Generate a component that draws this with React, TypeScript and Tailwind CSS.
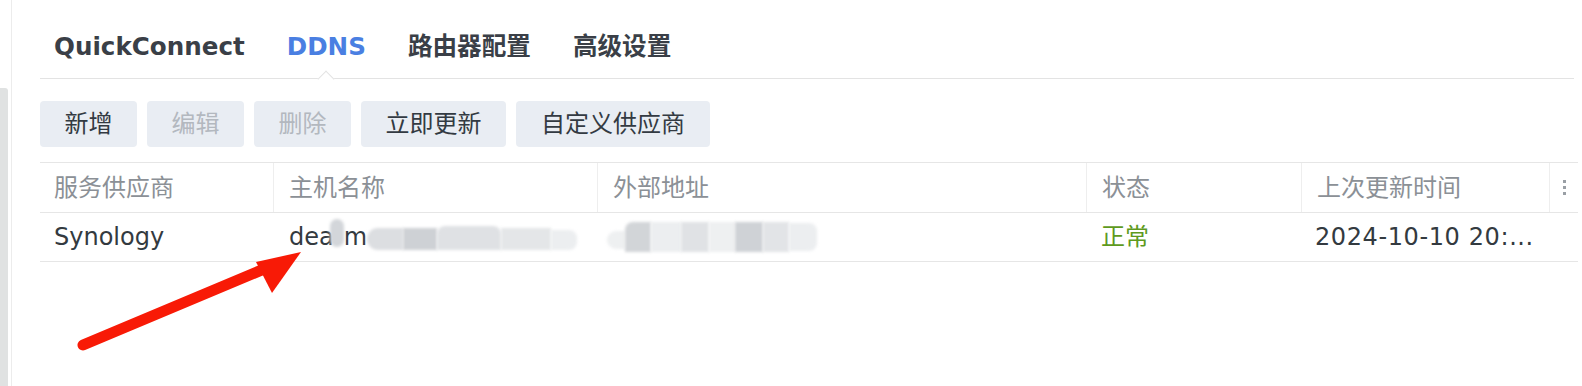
import React from 'react';

const font = { fontFamily: '"DejaVu Sans", "Noto Sans CJK SC", sans-serif' };

const tabs = ['QuickConnect', 'DDNS', '路由器配置', '高级设置'];

const buttons: { label: string; width: string; disabled?: boolean }[] = [
    { label: '新增', width: 'w-[97px]' },
    { label: '编辑', width: 'w-[97px]', disabled: true },
    { label: '删除', width: 'w-[97px]', disabled: true },
    { label: '立即更新', width: 'w-[145px]' },
    { label: '自定义供应商', width: 'w-[194px]' },
];

const Blur: React.FC<{ className: string }> = ({ className }) => (
    <span className={`inline-block blur-[1.5px] ${className}`}></span>
);

const App: React.FC = () => {
    return (
        <div className="relative flex w-[1582px] h-[386px] bg-white overflow-hidden" style={font}>
            {/* left scroll strip */}
            <div className="w-[12px] shrink-0 border-r border-[#ececec] flex flex-col">
                <div className="h-[88px]"></div>
                <div className="w-[8px] flex-1 bg-[#e0e2e2] rounded-tr-[3px]"></div>
            </div>

            <div className="flex-1 pl-[28px] pr-[4px]">
                {/* tabs */}
                <div className="h-[79px] pt-[16px] flex items-center gap-[42px] border-b border-[#e3e3e3] pl-[14px] mr-[4px]">
                    {tabs.map(t => (
                        <div
                            key={t}
                            className={`relative h-full flex items-center text-[24.6px] font-bold leading-8 ${t === 'DDNS' ? 'text-[#4a7fe2]' : 'text-[#3a3f47]'}`}
                        >
                            {t}
                            {t === 'DDNS' && (
                                <span className="absolute left-1/2 -bottom-[7px] -translate-x-1/2 w-[12px] h-[12px] rotate-45 bg-white border-t border-l border-[#e3e3e3]"></span>
                            )}
                        </div>
                    ))}
                </div>

                {/* toolbar */}
                <div className="flex gap-[10px] mt-[22px]">
                    {buttons.map(b => (
                        <div
                            key={b.label}
                            className={`${b.width} h-[46px] flex items-center justify-center rounded-[4px] bg-[#e9edf3] text-[24px] leading-8 ${b.disabled ? 'text-[#b3b8bf]' : 'text-[#333a42]'}`}
                        >
                            {b.label}
                        </div>
                    ))}
                </div>

                {/* table */}
                <div className="mt-[15px] border-t border-[#e6e6e6] text-[24px] leading-8">
                    <div className="grid grid-cols-[233px_324px_489px_215px_248px_1fr] h-[50px] border-b border-[#e6e6e6] text-[#8b9096]">
                        {['服务供应商', '主机名称', '外部地址', '状态', '上次更新时间'].map((h, i) => (
                            <div key={h} className={`flex items-center ${i === 0 ? 'pl-[14px]' : 'pl-[15px] border-l border-[#eeeeee]'}`}>
                                {h}
                            </div>
                        ))}
                        <div className="flex items-center justify-center border-l border-[#eeeeee]">
                            <div className="flex flex-col gap-[3px]">
                                <span className="w-[3px] h-[3px] bg-[#9a9fa5]"></span>
                                <span className="w-[3px] h-[3px] bg-[#9a9fa5]"></span>
                                <span className="w-[3px] h-[3px] bg-[#9a9fa5]"></span>
                            </div>
                        </div>
                    </div>
                    <div className="grid grid-cols-[233px_324px_489px_215px_248px_1fr] h-[49px] border-b border-[#e6e6e6] text-[#333a40]">
                        <div className="flex items-center pl-[14px]">Synology</div>
                        <div className="flex items-center pl-[16px]">
                            <span>dea</span>
                            <Blur className="w-[14px] h-[28px] -mt-[8px] -ml-[4px] rounded-full bg-[#d3d6da]" />
                            <span>m</span>
                            <Blur className="w-[36px] h-[22px] mt-[4px] rounded-l-full bg-[#dcdee1]" />
                            <Blur className="w-[34px] h-[22px] mt-[4px] bg-[#ced1d5]" />
                            <Blur className="w-[64px] h-[24px] mt-[2px] rounded-t-lg bg-[#dfe1e4]" />
                            <Blur className="w-[50px] h-[22px] mt-[4px] bg-[#e4e6e8]" />
                            <Blur className="w-[26px] h-[20px] mt-[6px] rounded-r-lg bg-[#eceef0]" />
                        </div>
                        <div className="flex items-center pl-[10px]">
                            <Blur className="w-[18px] h-[18px] mt-[6px] rounded-l-full bg-[#eef0f1]" />
                            <Blur className="w-[26px] h-[30px] rounded-tl-lg bg-[#d2d5d8]" />
                            <Blur className="w-[30px] h-[30px] bg-[#eceef0]" />
                            <Blur className="w-[28px] h-[30px] bg-[#e0e2e5]" />
                            <Blur className="w-[26px] h-[30px] bg-[#eef0f1]" />
                            <Blur className="w-[28px] h-[30px] bg-[#cfd2d6]" />
                            <Blur className="w-[26px] h-[30px] bg-[#e2e4e7]" />
                            <Blur className="w-[28px] h-[28px] rounded-r-lg bg-[#eceef0]" />
                        </div>
                        <div className="flex items-center pl-[15px] text-[#5e9a1d]">正常</div>
                        <div className="flex items-center pl-[14px] tracking-[0.6px] whitespace-nowrap">2024-10-10 20:...</div>
                        <div></div>
                    </div>
                </div>
            </div>

            {/* red annotation arrow */}
            <svg className="absolute left-0 top-0 pointer-events-none" width="1582" height="386">
                <line x1="83" y1="345" x2="276" y2="264" stroke="#f81a06" strokeWidth="11" strokeLinecap="round" />
                <polygon points="301,252 256,262 272,293" fill="#f81a06" />
            </svg>
        </div>
    );
};

export default App;
